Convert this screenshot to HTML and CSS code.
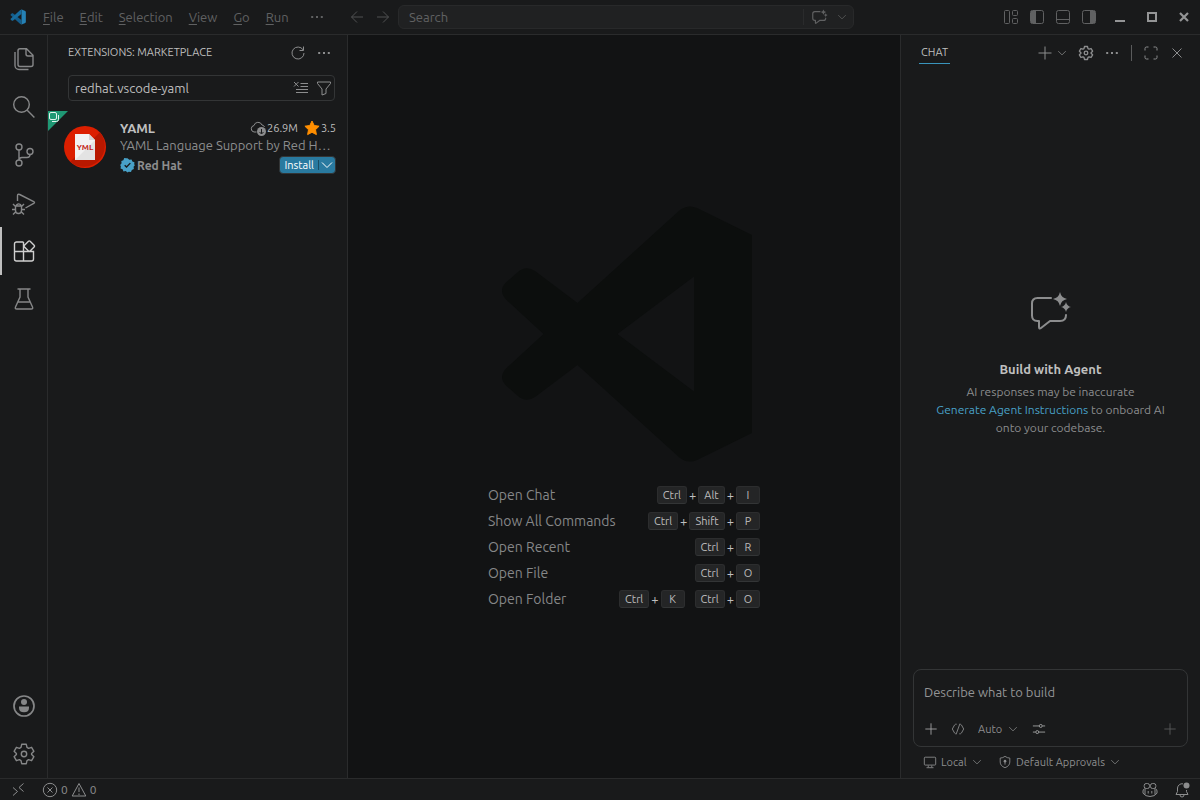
FILE: index.html
```html
<!DOCTYPE html>
<html lang="en">
<head>
    <meta charset="UTF-8">
    <meta name="viewport" content="width=device-width, initial-scale=1.0">
    <title>Extensions: Marketplace - Visual Studio Code</title>
    <link rel="stylesheet" href="styles.css">
</head>
<body>
    <!-- shared icons -->
    <svg class="sprite" aria-hidden="true">
        <symbol id="chevron" viewBox="0 0 16 16"><path d="M3 5.500 8 10.500 13 5.500"/></symbol>
        <symbol id="dots" viewBox="0 0 16 16"><path d="M2.200 8h2M7 8h2M11.800 8h2" stroke-width="1.800"/></symbol>
        <symbol id="plus" viewBox="0 0 16 16"><path d="M8 1.500v13M1.500 8h13"/></symbol>
        <symbol id="gear" viewBox="0 0 24 24">
            <path d="M9.700 2.300h4.600l.7 3.100 1.600.9 3-1 2.300 4-2.300 2.200v1l2.300 2.200-2.300 4-3-1-1.600.9-.7 3.100H9.700L9 18.600l-1.600-.9-3 1-2.300-4 2.300-2.200v-1L2.100 9.300l2.300-4 3 1L9 5.400z" stroke-linejoin="round"/>
            <circle cx="12" cy="12" r="2.700"/>
        </symbol>
        <symbol id="chat-sparkle" viewBox="0 0 42 40">
            <path d="M21 6H7.500Q2 6 2 11.500v12Q2 29 7.500 29H9v6q0 2.500 2 1L20 29h10q6 0 6-6" stroke-linecap="round" stroke-linejoin="round"/>
            <path class="solid" d="M30 0q1.200 5.800 7 7-5.800 1.200-7 7-1.200-5.800-7-7 5.800-1.200 7-7zM36 10q1 4.200 5 5-4 .8-5 5-1-4.200-5-5 4-.8 5-5z"/>
        </symbol>
    </svg>

    <header class="titlebar">
        <div class="titlebar-left">
            <svg class="app-logo" viewBox="0 0 100 100" aria-hidden="true">
                <path fill="#145d8b" d="M4 35 12 27q3-2 6 0l53 41v28q-4 0-7-3L4 39q-2-2 0-4z"/>
                <path fill="#176b9d" d="M4 65q-2-2 0-4L64 7q3-3 7-3v28L18 73q-3 2-6 0z"/>
                <path fill="#2581b5" d="M71 97q4 0 6-1l18-9q4-2 4-6V19q0-4-4-6L77 4q-4-2-9 2 4-2 4 3v82q0 5-4 3 1 2 3 3z"/>
            </svg>
            <nav class="menu" aria-label="Application menu">
                <button><u>F</u>ile</button>
                <button><u>E</u>dit</button>
                <button><u>S</u>election</button>
                <button><u>V</u>iew</button>
                <button><u>G</u>o</button>
                <button><u>R</u>un</button>
                <button class="menu-more" aria-label="More"><svg class="icon"><use href="#dots"/></svg></button>
            </nav>
        </div>
        <div class="titlebar-center">
            <div class="nav-arrows">
                <button aria-label="Go back"><svg class="icon" viewBox="0 0 16 16"><path d="M14 8H2.500M8 2.500 2.500 8 8 13.500"/></svg></button>
                <button aria-label="Go forward"><svg class="icon" viewBox="0 0 16 16"><path d="M2 8h11.500M8 2.500 13.500 8 8 13.500"/></svg></button>
            </div>
            <div class="command-center">
                <button class="command-search">Search</button>
                <button class="command-chat" aria-label="Toggle chat"><svg class="icon"><use href="#chat-sparkle"/></svg></button>
                <button class="command-drop" aria-label="Chat options"><svg class="icon small"><use href="#chevron"/></svg></button>
            </div>
        </div>
        <div class="titlebar-right">
            <div class="layout-controls">
                <button aria-label="Customize layout"><svg class="icon" viewBox="0 0 16 16"><rect x="1.500" y="1.500" width="5" height="13" rx="1"/><rect x="9.500" y="1.500" width="5" height="5" rx="1"/><rect x="9.500" y="9.500" width="5" height="5" rx="1"/></svg></button>
                <button aria-label="Toggle primary side bar"><svg class="icon" viewBox="0 0 16 16"><rect x="1.500" y="1.500" width="13" height="13" rx="2"/><path class="solid" d="M2 2h5v12H2z"/></svg></button>
                <button aria-label="Toggle panel"><svg class="icon" viewBox="0 0 16 16"><rect x="1.500" y="1.500" width="13" height="13" rx="2"/><path d="M2 10.500h12"/></svg></button>
                <button aria-label="Toggle secondary side bar"><svg class="icon" viewBox="0 0 16 16"><rect x="1.500" y="1.500" width="13" height="13" rx="2"/><path class="solid" d="M9 2h5v12H9z"/></svg></button>
            </div>
            <div class="window-controls">
                <button aria-label="Minimize"><svg class="icon" viewBox="0 0 16 16"><path d="M3 12h10" stroke-width="2"/></svg></button>
                <button aria-label="Maximize"><svg class="icon" viewBox="0 0 16 16"><path d="M4 4h8v8H4z" stroke-width="2"/></svg></button>
                <button aria-label="Close window"><svg class="icon" viewBox="0 0 16 16"><path d="m4 4 8 8M12 4l-8 8" stroke-width="2.200"/></svg></button>
            </div>
        </div>
    </header>

    <main class="workbench">
        <nav class="activity-bar" aria-label="Activity bar">
            <button aria-label="Explorer"><svg viewBox="0 0 24 24"><path d="M8 1.800h6.500L21 8.300v9.200a2 2 0 0 1-2 2H8a2 2 0 0 1-2-2V3.800a2 2 0 0 1 2-2zM14 2v5a2 2 0 0 0 2 2h5M3 5v13.500a4 4 0 0 0 4 4h9.500"/></svg></button>
            <button aria-label="Search"><svg viewBox="0 0 24 24"><circle cx="9.500" cy="9.500" r="7.800"/><path d="m15.200 15.200 7.200 7.200"/></svg></button>
            <button aria-label="Source control"><svg viewBox="0 0 24 24"><circle cx="7" cy="4" r="3"/><circle cx="7" cy="20" r="3"/><circle cx="18" cy="8.500" r="3"/><path d="M7 7v10M18 11.500a3 3 0 0 1-3 3h-5a3 3 0 0 0-3 2.500"/></svg></button>
            <button aria-label="Run and debug"><svg viewBox="0 0 24 24"><path d="M5.500 10V5q0-2.500 2.200-1.500l14 7q1.600.9 0 1.900l-8.200 4.600M3.500 15h6v4.500a3 3 0 0 1-6 0zM4.200 15a2.600 2.600 0 0 1 5.100 0M1 13l2.500 2.500M12 13l-2.500 2.500M0 18.500h3.500M9.500 18.500H13M1 23.500 3.500 21M12 23.500 9.500 21"/></svg></button>
            <button class="active" aria-label="Extensions"><svg viewBox="0 0 24 24"><path d="M11.500 3h-7a2 2 0 0 0-2 2v15a2 2 0 0 0 2 2h15a2 2 0 0 0 2-2v-7.500h-19M11.500 3v19M16.500 2.300q.8-.8 1.600 0l4 4q.8.8 0 1.600l-4 4q-.8.8-1.600 0l-4-4q-.8-.8 0-1.600z"/></svg></button>
            <button aria-label="Testing"><svg viewBox="0 0 24 24"><path d="M5.500 2h13M8 2v8L3.500 20q-.8 2 1.300 2h14.400q2.100 0 1.300-2L16 10V2M6 15h12"/></svg></button>
            <button class="account" aria-label="Accounts"><svg viewBox="0 0 24 24"><circle cx="12" cy="12" r="10" stroke-width="1.700"/><circle class="solid" cx="12" cy="8" r="3"/><path class="solid" d="M7 12.500h10v1.500q0 4.200-5 4.200T7 14z"/></svg></button>
            <button aria-label="Manage"><svg><use href="#gear"/></svg></button>
        </nav>

        <aside class="sidebar">
            <div class="panel-header">
                <h2>EXTENSIONS: MARKETPLACE</h2>
                <div class="panel-actions">
                    <button aria-label="Refresh"><svg class="icon" viewBox="0 0 16 16"><path d="M13 4.700A6 6 0 1 0 14 8M13.500 1.500v4h-4"/></svg></button>
                    <button aria-label="Views and more actions"><svg class="icon"><use href="#dots"/></svg></button>
                </div>
            </div>
            <div class="extension-search">
                <input type="text" value="redhat.vscode-yaml" aria-label="Search extensions in marketplace" spellcheck="false">
                <button aria-label="Clear search results"><svg class="icon" viewBox="0 0 16 16"><path d="m1 2 4.500 4.500M5.500 2 1 6.500M7.500 3.500H15M7.500 6.500H15M3 9.500h12M3 12.500h12"/></svg></button>
                <button aria-label="Filter extensions"><svg class="icon" viewBox="0 0 16 16"><path d="M1.500 2h13v1.500L10 9v4.500L6 15V9L1.500 3.500z" stroke-linejoin="round"/></svg></button>
            </div>
            <article class="extension">
                <span class="recommended">
                    <svg viewBox="0 0 20 20" aria-hidden="true">
                        <path fill="#1f9874" d="M0 0h20L0 20z"/>
                        <rect x="1.500" y="1.500" width="7" height="7" rx="1.500" fill="none" stroke="#e3f4ee"/>
                        <path d="M4 10.500h4.500q2 0 2-2V4" fill="none" stroke="#e3f4ee"/>
                    </svg>
                </span>
                <svg class="extension-icon" viewBox="0 0 42 42" aria-hidden="true">
                    <circle cx="21" cy="21" r="21" fill="#dc1f00"/>
                    <path fill="#b81800" d="M35.800 6.200a21 21 0 0 1-29.600 29.600z"/>
                    <path fill="#f2f2f2" d="M11 8h14l6 6v20H11z"/>
                    <path fill="#d5d5d5" d="m25 8 6 6h-6z"/>
                    <path fill="#e3e3e3" d="M31 14v20H11l18-18z"/>
                    <text x="21" y="24" text-anchor="middle" class="yml-text">YML</text>
                </svg>
                <div class="extension-details">
                    <div class="extension-row">
                        <h3>YAML</h3>
                        <span class="installs">
                            <svg class="icon" viewBox="0 0 16 16"><path d="M6.500 12H4A3.300 3.300 0 0 1 4 5.500a4.200 4.200 0 0 1 8-.5 3 3 0 0 1 2.500 2"/><circle class="solid" cx="11.500" cy="11.500" r="4.500"/><path class="cut" d="M11.500 9v4.500M9.500 12l2 2 2-2"/></svg>
                            26.9M
                        </span>
                        <span class="rating">
                            <svg class="icon star" viewBox="0 0 16 16"><path d="m8 1 2.200 4.500 4.900.7-3.600 3.500.9 4.900L8 12.300l-4.400 2.300.9-4.900L.9 6.200l4.900-.7z"/></svg>
                            3.5
                        </span>
                    </div>
                    <p>YAML Language Support by Red Hat, with built-in Kubernetes syntax support</p>
                    <div class="extension-row">
                        <span class="publisher">
                            <svg class="icon verified" viewBox="0 0 16 16"><path d="m8 .8 1.900 1.500 2.400-.3.900 2.200 2.200.9-.3 2.400L16 8l-1.500 1.900.3 2.400-2.200.9-.9 2.200-2.400-.3L8 16l-1.900-1.500-2.400.3-.9-2.200-2.200-.9.300-2.400L.2 8l1.500-1.900-.3-2.400 2.200-.9.900-2.200 2.400.3z"/><path class="cut" d="m5 8.200 2 2L11 6" stroke-width="1.500"/></svg>
                            Red Hat
                        </span>
                        <div class="install">
                            <button>Install</button>
                            <button class="install-drop" aria-label="Install options"><svg class="icon"><use href="#chevron"/></svg></button>
                        </div>
                    </div>
                </div>
            </article>
        </aside>

        <section class="editor">
            <div class="watermark">
                <svg class="letterpress" viewBox="0 0 272 256" aria-hidden="true">
                    <path fill-rule="evenodd" d="M264 29 209 2q-9-4-17 2L89.500 97 47 65q-9-6-17 1L18 76.500q-8 8 0 17L55.500 128 18 162.500q-8 9 0 17L30 190q8 7 17 1l42.500-32L192 252q8 6 17 2l55-27zM206 70.500v115L129.500 128z"/>
                </svg>
                <dl class="shortcuts">
                    <div><dt>Open Chat</dt><dd><kbd>Ctrl</kbd>+<kbd>Alt</kbd>+<kbd>I</kbd></dd></div>
                    <div><dt>Show All Commands</dt><dd><kbd>Ctrl</kbd>+<kbd>Shift</kbd>+<kbd>P</kbd></dd></div>
                    <div><dt>Open Recent</dt><dd><kbd>Ctrl</kbd>+<kbd>R</kbd></dd></div>
                    <div><dt>Open File</dt><dd><kbd>Ctrl</kbd>+<kbd>O</kbd></dd></div>
                    <div><dt>Open Folder</dt><dd><kbd>Ctrl</kbd>+<kbd>K</kbd><kbd class="chord">Ctrl</kbd>+<kbd>O</kbd></dd></div>
                </dl>
            </div>
        </section>

        <aside class="chat">
            <div class="panel-header chat-header">
                <h2 class="chat-tab">CHAT</h2>
                <div class="panel-actions">
                    <div class="new-chat">
                        <button aria-label="New chat"><svg class="icon"><use href="#plus"/></svg></button>
                        <button aria-label="New chat options"><svg class="icon small"><use href="#chevron"/></svg></button>
                    </div>
                    <button aria-label="Configure chat"><svg class="icon bold-icon"><use href="#gear"/></svg></button>
                    <button aria-label="More actions"><svg class="icon"><use href="#dots"/></svg></button>
                    <span class="separator"></span>
                    <button aria-label="Maximize chat"><svg class="icon" viewBox="0 0 16 16"><path d="M2 5.500v-2Q2 2 3.500 2h2M10.500 2h2Q14 2 14 3.500v2M14 10.500v2q0 1.500-1.500 1.500h-2M5.500 14h-2Q2 14 2 12.500v-2"/></svg></button>
                    <button aria-label="Close chat"><svg class="icon" viewBox="0 0 16 16"><path d="m3.500 3.500 9 9M12.500 3.500l-9 9"/></svg></button>
                </div>
            </div>
            <div class="welcome">
                <svg class="welcome-icon"><use href="#chat-sparkle"/></svg>
                <h3>Build with Agent</h3>
                <p>AI responses may be inaccurate</p>
                <p><a href="#">Generate Agent Instructions</a> to onboard AI onto your codebase.</p>
            </div>
            <div class="chat-input">
                <textarea rows="1" placeholder="Describe what to build" aria-label="Chat input"></textarea>
                <div class="chat-toolbar">
                    <button class="bright" aria-label="Add context"><svg class="icon"><use href="#plus"/></svg></button>
                    <button aria-label="Set agent"><svg class="icon" viewBox="0 0 16 16"><path d="M6.500 2.500H5.300L4 3.500 1.500 8 4 12.500l1.300 1h1.200M9.500 13.500h1.200l1.300-1L14.500 8 12 3.500l-1.300-1H9.500M10 2.500l-4 11"/></svg></button>
                    <label class="picker">
                        <select aria-label="Model"><option>Auto</option></select>
                        <svg class="icon small"><use href="#chevron"/></svg>
                    </label>
                    <button class="bright" aria-label="Configure tools"><svg class="icon" viewBox="0 0 16 16"><path d="M1 4.500h7M12 4.500h3M1 11.500h3M8 11.500h7"/><circle cx="10" cy="4.500" r="1.700"/><circle cx="6" cy="11.500" r="1.700"/></svg></button>
                    <button class="send" aria-label="Send"><svg class="icon"><use href="#plus"/></svg></button>
                </div>
            </div>
            <div class="chat-footer">
                <label class="picker">
                    <svg class="icon footer-icon" viewBox="0 0 16 16"><rect x="1.500" y="2.500" width="13" height="9" rx="1"/><path d="M6 12v2M10 12v2M4 14.500h8"/></svg>
                    <select aria-label="Session target"><option>Local</option></select>
                    <svg class="icon small"><use href="#chevron"/></svg>
                </label>
                <label class="picker">
                    <svg class="icon footer-icon" viewBox="0 0 16 16"><path d="M8 1.500q2.500 2 5.500 2V8q0 4.500-5.500 6.500Q2.500 12.500 2.500 8V3.500q3 0 5.500-2zM8 7v4"/><circle class="solid" cx="8" cy="7" r="1.500"/></svg>
                    <select aria-label="Permissions"><option>Default Approvals</option></select>
                    <svg class="icon small"><use href="#chevron"/></svg>
                </label>
            </div>
        </aside>
    </main>

    <footer class="statusbar">
        <button class="remote" aria-label="Open a remote window"><svg class="icon" viewBox="0 0 16 16"><path d="m3 5.500 4.500 4L3 13.500M13.500 1.500 9 5.500l4.500 4"/></svg></button>
        <button class="problems" aria-label="0 errors, 0 warnings">
            <svg class="icon" viewBox="0 0 16 16"><circle cx="8" cy="8" r="6.700"/><path d="m5.500 5.500 5 5M10.500 5.500l-5 5"/></svg>
            <span>0</span>
            <svg class="icon" viewBox="0 0 16 16"><path d="M8 1.500 1.200 14h13.600zM8 5.500v4.500M8 11.500V13" stroke-linejoin="round"/></svg>
            <span>0</span>
        </button>
        <button class="copilot" aria-label="Copilot status"><svg class="icon" viewBox="0 0 16 16"><rect x="2.200" y="1.500" width="5.300" height="5" rx="2"/><rect x="8.500" y="1.500" width="5.300" height="5" rx="2"/><path d="M2.500 6.500Q1 7.500 1 9v2.200Q3.500 14.500 8 14.500t7-3.300V9q0-1.500-1.500-2.500M3 7v5.500M13 7v5.500M6.200 9v2.500M9.800 9v2.500"/></svg></button>
        <button aria-label="Notifications"><svg class="icon" viewBox="0 0 16 16"><path d="M9 1.800A4.700 4.700 0 0 0 3.500 6v3.500l-1.500 3h12l-1.500-3V8M6 13a2 2 0 0 0 4 0"/><circle class="solid" cx="12.500" cy="3.500" r="3"/></svg></button>
    </footer>
</body>
</html>
```
FILE: styles.css
```css
* {
    box-sizing: border-box;
}
body {
    font-family: Ubuntu, "Open Sans", sans-serif;
    font-size: 13px;
    margin: 0;
    height: 100vh;
    display: flex;
    flex-direction: column;
    background-color: #191a1b;
    color: #bfbfbf;
    overflow: hidden;
}
h2, h3, p, dl, dd {
    margin: 0;
    font-weight: normal;
}
button, input, textarea, select {
    font: inherit;
    color: inherit;
    background: none;
    border: none;
    padding: 0;
    margin: 0;
    outline: none;
}
button {
    display: flex;
    align-items: center;
    justify-content: center;
    cursor: pointer;
}
svg {
    fill: none;
    stroke: currentColor;
    flex-shrink: 0;
}
.sprite {
    display: none;
}
.solid {
    fill: currentColor;
    stroke: none;
}
.cut {
    stroke: #191a1b;
}
.icon {
    width: 16px;
    height: 16px;
}
.icon.small {
    width: 12px;
    height: 12px;
}
.bold-icon {
    stroke-width: 2;
}

/* title bar */
.titlebar {
    height: 35px;
    flex-shrink: 0;
    display: flex;
    align-items: center;
    border-bottom: 1px solid #2a2b2c;
    color: #606162;
}
.titlebar-left, .titlebar-right {
    flex: 1;
    display: flex;
    align-items: center;
}
.app-logo {
    width: 16px;
    height: 16px;
    margin: 0 9px 0 10px;
    stroke: none;
}
.menu {
    display: flex;
}
.menu button {
    padding: 0 8px;
}
.menu u {
    text-underline-offset: 2px;
}
.menu .menu-more {
    padding: 0 12px;
}
.titlebar-center {
    display: flex;
    align-items: center;
}
.nav-arrows {
    width: 52px;
    display: flex;
    gap: 10px;
    padding-left: 3px;
    color: #505152;
}
.command-center {
    width: 38vw;
    height: 24px;
    display: flex;
    align-items: center;
    background-color: #202122;
    border: 1px solid #28292a;
    border-radius: 6px;
}
.command-search {
    flex: 1;
    justify-content: flex-start;
    padding-left: 10px;
}
.command-chat {
    width: 32px;
    height: 16px;
    border-left: 1px solid #2a2b2c;
}
.command-chat .icon {
    stroke-width: 3;
}
.command-drop {
    width: 14px;
    margin-right: 4px;
}
.titlebar-right {
    justify-content: flex-end;
}
.layout-controls {
    display: flex;
    gap: 10px;
    margin-right: 7px;
}
.window-controls {
    display: flex;
    color: #949596;
}
.window-controls button {
    width: 32px;
}

.workbench {
    flex: 1;
    min-height: 0;
    display: flex;
}

/* activity bar */
.activity-bar {
    width: 48px;
    flex-shrink: 0;
    display: flex;
    flex-direction: column;
    border-right: 1px solid #2a2b2c;
    color: #868788;
}
.activity-bar button {
    height: 48px;
    border-left: 2px solid transparent;
    padding-right: 1px;
}
.activity-bar svg {
    width: 24px;
    height: 24px;
    stroke-width: 1.4;
}
.activity-bar .active {
    border-color: #bfbfbf;
    color: #cfcfcf;
}
.activity-bar .account {
    margin-top: auto;
}

/* side bar */
.sidebar {
    width: 300px;
    flex-shrink: 0;
    border-right: 1px solid #2a2b2c;
}
.panel-header {
    height: 35px;
    display: flex;
    align-items: center;
    justify-content: space-between;
    padding: 0 15px 0 20px;
}
.panel-header h2 {
    font-size: 11px;
    padding-bottom: 2px;
}
.panel-actions {
    display: flex;
    align-items: center;
    gap: 10px;
    color: #8c8d8e;
}
.extension-search {
    height: 26px;
    display: flex;
    align-items: center;
    gap: 7px;
    margin: 5px 12px 10px 20px;
    padding: 0 2px 0 6px;
    border: 1px solid #333536;
    border-radius: 4px;
    color: #8c8d8e;
}
.extension-search input {
    flex: 1;
    min-width: 0;
    color: #bfbfbf;
}
.extension {
    position: relative;
    display: flex;
    padding: 8px 11px 8px 16px;
}
.recommended {
    position: absolute;
    top: 0;
    left: 0;
}
.recommended svg {
    display: block;
    width: 20px;
    height: 20px;
    stroke: none;
}
.extension-icon {
    width: 42px;
    height: 42px;
    margin: 7px 14px 0 0;
    stroke: none;
}
.yml-text {
    font-size: 8px;
    font-weight: bold;
    fill: #c4271b;
}
.extension-details {
    flex: 1;
    min-width: 0;
}
.extension-row {
    display: flex;
    align-items: center;
    height: 18px;
}
.extension h3 {
    flex: 1;
    font-size: 13px;
    font-weight: bold;
}
.installs, .rating {
    display: flex;
    align-items: center;
    gap: 1px;
    font-size: 11px;
}
.installs {
    margin-right: 6px;
}
.installs .icon {
    color: #8c8d8e;
}
.star {
    fill: #ff8e00;
    stroke: #ff8e00;
}
.extension p {
    line-height: 17px;
    margin-bottom: 2px;
    white-space: nowrap;
    overflow: hidden;
    text-overflow: ellipsis;
    color: #8c8d8e;
}
.publisher {
    flex: 1;
    display: flex;
    align-items: center;
    gap: 2px;
    font-size: 12px;
    font-weight: bold;
    color: #8c8d8e;
}
.publisher .verified {
    width: 15px;
    fill: #48a0c7;
    stroke: none;
}
.install {
    display: flex;
    height: 18px;
    align-items: center;
    background-color: #297aa0;
    border: 1px solid #333536;
    border-radius: 4px;
    font-size: 11px;
    color: #fff;
}
.install button {
    padding: 0 4px;
}
.install .install-drop {
    height: 10px;
    padding: 0;
    border-left: 1px solid #1c4d64;
}

/* empty editor */
.editor {
    flex: 1;
    min-width: 0;
    display: flex;
    align-items: center;
    justify-content: center;
    padding-top: 4px;
    background-color: #121314;
}
.watermark {
    width: 272px;
}
.letterpress {
    display: block;
    width: 100%;
    margin-bottom: 20px;
    fill: #0c0e0d;
    stroke: none;
}
.shortcuts div {
    height: 26px;
    display: flex;
    align-items: center;
    justify-content: space-between;
}
.shortcuts dt {
    font-size: 14px;
    color: #868788;
}
.shortcuts dd {
    display: flex;
    align-items: center;
    gap: 2px;
}
kbd {
    min-width: 24px;
    height: 18px;
    line-height: 16px;
    padding: 0 5px;
    font-family: inherit;
    font-size: 11px;
    text-align: center;
    background-color: #242526;
    border: 1px solid #2c2d2e;
    border-bottom-color: #333536;
    border-radius: 3px;
}
kbd.chord {
    margin-left: 8px;
}

/* chat */
.chat {
    width: 300px;
    flex-shrink: 0;
    display: flex;
    flex-direction: column;
    border-left: 1px solid #2a2b2c;
}
.chat-header {
    padding: 0 15px 0 18px;
}
.chat-header .chat-tab {
    padding: 0 2px;
    line-height: 22px;
    border-bottom: 1px solid #3994bc;
}
.new-chat {
    display: flex;
    align-items: center;
    gap: 3px;
}
.separator {
    width: 1px;
    height: 16px;
    margin: 0 1px;
    background-color: #5a5b5c;
}
.welcome {
    flex: 1;
    display: flex;
    flex-direction: column;
    align-items: center;
    justify-content: center;
    padding: 0 24px 11px;
    font-size: 12px;
    line-height: 18px;
    text-align: center;
    color: #8c8d8e;
}
.welcome-icon {
    width: 42px;
    height: 40px;
    margin-bottom: 28px;
    stroke-width: 2;
}
.welcome h3 {
    font-size: 13px;
    font-weight: bold;
    margin-bottom: 5px;
    color: #bfbfbf;
}
.welcome a {
    color: #48a0c7;
    text-decoration: none;
}
.chat-input {
    margin: 0 12px;
    padding: 12px 10px 8px;
    border: 1px solid #333536;
    border-radius: 8px;
}
.chat-input textarea {
    display: block;
    width: 100%;
    height: 20px;
    line-height: 20px;
    margin-bottom: 18px;
    resize: none;
    overflow: hidden;
}
.chat-input textarea::placeholder {
    color: #949596;
    opacity: 1;
}
.chat-toolbar {
    display: flex;
    align-items: center;
    gap: 13px;
    height: 18px;
    color: #8c8d8e;
}
.chat-toolbar .icon:not(.small) {
    width: 14px;
    height: 14px;
}
.chat-toolbar .bright {
    color: #a5a6a7;
}
.send {
    margin-left: auto;
    color: #5a5b5c;
}
.picker {
    display: flex;
    align-items: center;
    gap: 4px;
    font-size: 11px;
    color: #8c8d8e;
}
.picker select {
    appearance: none;
}
.footer-icon {
    width: 14px;
    height: 14px;
}
.chat-footer {
    display: flex;
    gap: 15px;
    padding: 8px 22px 9px;
}

/* status bar */
.statusbar {
    height: 22px;
    flex-shrink: 0;
    display: flex;
    align-items: center;
    border-top: 1px solid #2a2b2c;
    padding: 0 10px;
    font-size: 12px;
    color: #8c8d8e;
}
.remote {
    margin-right: 16px;
}
.problems {
    gap: 3px;
}
.copilot {
    margin-left: auto;
    margin-right: 16px;
}
```
